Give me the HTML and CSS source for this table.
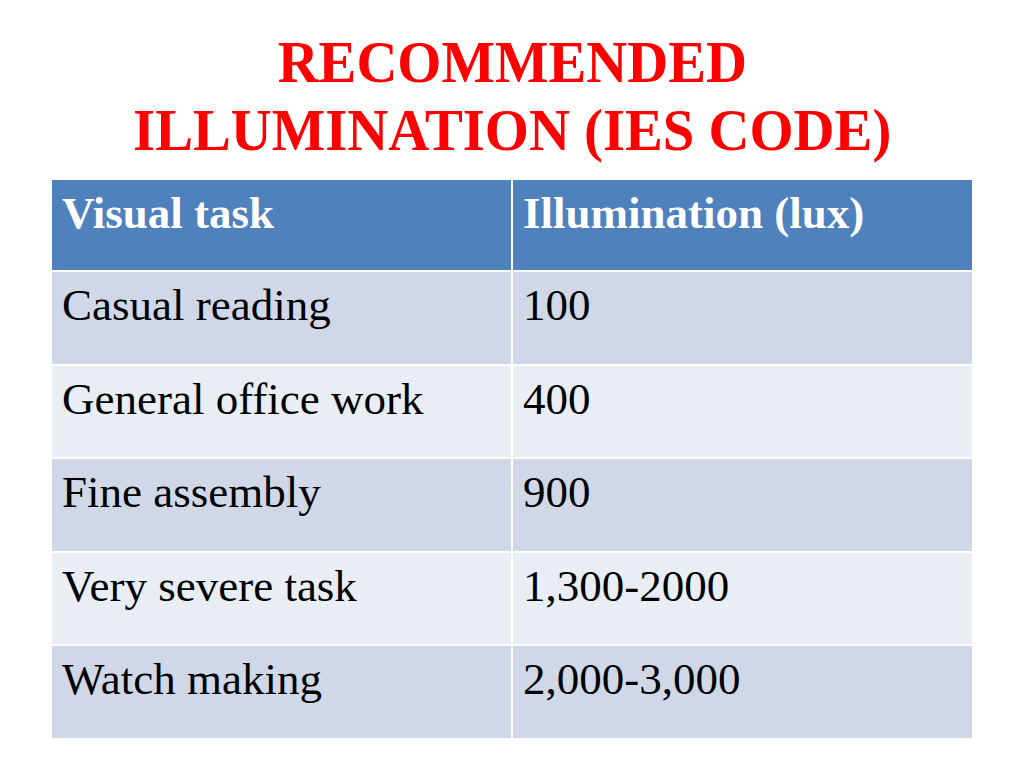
FILE: index.html
```html
<!DOCTYPE html>
<html lang="en">
<head>
<meta charset="utf-8">
<title>Recommended Illumination (IES Code)</title>
<link rel="stylesheet" href="styles.css">
</head>
<body>
<div class="slide">
  <h1 class="title">
    <span class="line">RECOMMENDED</span>
    <span class="line">ILLUMINATION (IES CODE)</span>
  </h1>
  <div class="tbl">
    <div class="cell head">Visual task</div>
    <div class="cell head">Illumination (lux)</div>
    <div class="cell odd">Casual reading</div>
    <div class="cell odd">100</div>
    <div class="cell even">General office work</div>
    <div class="cell even">400</div>
    <div class="cell odd">Fine assembly</div>
    <div class="cell odd">900</div>
    <div class="cell even">Very severe task</div>
    <div class="cell even">1,300-2000</div>
    <div class="cell odd">Watch making</div>
    <div class="cell odd">2,000-3,000</div>
  </div>
</div>
</body>
</html>
```

FILE: styles.css
```css
html, body {
  margin: 0;
  padding: 0;
  background: #ffffff;
}

.slide {
  width: 1024px;
  height: 768px;
  padding-top: 28px;
  box-sizing: border-box;
  font-family: "Liberation Serif", "Times New Roman", serif;
}

.title {
  margin: 0;
  display: flex;
  flex-direction: column;
  align-items: center;
  color: #ff0000;
  font-size: 60px;
  font-weight: bold;
  line-height: 68px;
}

.title .line {
  display: block;
  white-space: nowrap;
  transform: scaleX(0.945);
}

.tbl {
  margin: 16px 0 0 52px;
  width: 920px;
  display: grid;
  grid-template-columns: 459px 459px;
  grid-template-rows: 90px repeat(5, 91.5px);
  column-gap: 2px;
  row-gap: 2px;
}

.cell {
  box-sizing: border-box;
  padding: 7px 10px 0 10px;
  font-size: 45px;
  line-height: 52px;
  color: #000000;
  white-space: nowrap;
}

.head {
  background: #4f81bd;
  color: #ffffff;
  font-weight: bold;
  margin-bottom: 1px;
  height: 90px;
}

.odd {
  background: #d0d8e8;
}

.even {
  background: #e9edf4;
}
```
